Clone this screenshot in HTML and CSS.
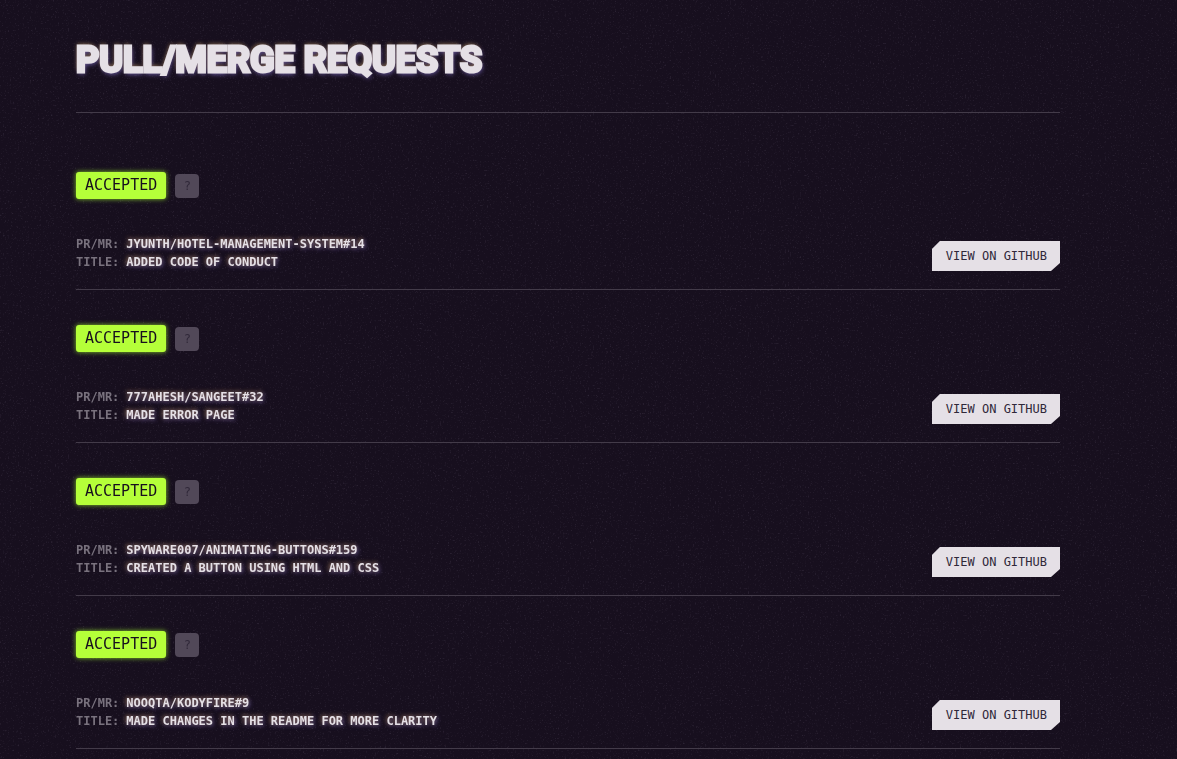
FILE: index.html
```html
<!DOCTYPE html>
<html lang="en">
<head>
<meta charset="utf-8">
<meta name="viewport" content="width=device-width, initial-scale=1">
<title>Pull/Merge Requests</title>
<link rel="stylesheet" href="styles.css">
</head>
<body>
<svg class="grain" aria-hidden="true">
  <filter id="noise" x="0" y="0" width="100%" height="100%" color-interpolation-filters="sRGB">
    <feTurbulence type="fractalNoise" baseFrequency="0.6" numOctaves="3" seed="4"/>
    <feColorMatrix values="0 0 0 0 0.55  0 0 0 0 0.5  0 0 0 0 0.6  1.5 0 0 0 -0.88"/>
  </filter>
  <rect width="100%" height="100%" filter="url(#noise)"/>
</svg>
<main class="page">
  <header class="page-header"><h1 class="title">PULL/MERGE REQUESTS</h1></header>
  <ul class="requests">
    <li class="request">
      <div class="status"><span class="badge">ACCEPTED</span><button class="help" type="button" aria-label="About this status">?</button></div>
      <div class="request-body">
        <dl class="details">
          <div class="detail"><dt>PR/MR:</dt><dd>JYUNTH/HOTEL-MANAGEMENT-SYSTEM#14</dd></div>
          <div class="detail"><dt>TITLE:</dt><dd>ADDED CODE OF CONDUCT</dd></div>
        </dl>
        <a class="view" href="#">VIEW ON GITHUB</a>
      </div>
    </li>
    <li class="request">
      <div class="status"><span class="badge">ACCEPTED</span><button class="help" type="button" aria-label="About this status">?</button></div>
      <div class="request-body">
        <dl class="details">
          <div class="detail"><dt>PR/MR:</dt><dd>777AHESH/SANGEET#32</dd></div>
          <div class="detail"><dt>TITLE:</dt><dd>MADE ERROR PAGE</dd></div>
        </dl>
        <a class="view" href="#">VIEW ON GITHUB</a>
      </div>
    </li>
    <li class="request">
      <div class="status"><span class="badge">ACCEPTED</span><button class="help" type="button" aria-label="About this status">?</button></div>
      <div class="request-body">
        <dl class="details">
          <div class="detail"><dt>PR/MR:</dt><dd>SPYWARE007/ANIMATING-BUTTONS#159</dd></div>
          <div class="detail"><dt>TITLE:</dt><dd>CREATED A BUTTON USING HTML AND CSS</dd></div>
        </dl>
        <a class="view" href="#">VIEW ON GITHUB</a>
      </div>
    </li>
    <li class="request">
      <div class="status"><span class="badge">ACCEPTED</span><button class="help" type="button" aria-label="About this status">?</button></div>
      <div class="request-body">
        <dl class="details">
          <div class="detail"><dt>PR/MR:</dt><dd>NOOQTA/KODYFIRE#9</dd></div>
          <div class="detail"><dt>TITLE:</dt><dd>MADE CHANGES IN THE README FOR MORE CLARITY</dd></div>
        </dl>
        <a class="view" href="#">VIEW ON GITHUB</a>
      </div>
    </li>
  </ul>
</main>
</body>
</html>
```
FILE: styles.css
```css
* { box-sizing: border-box; }

body {
  margin: 0;
  background: #170f1e;
  color: #e5e0e6;
  font: 12px/18px "DejaVu Sans Mono", "Liberation Mono", monospace;
}

.grain {
  position: fixed;
  inset: 0;
  width: 100%;
  height: 100%;
  opacity: 0.4;
  pointer-events: none;
}

.page {
  position: relative;
  padding: 32px 117px 0 76px;
}

.page-header {
  padding-bottom: 24px;
  border-bottom: 1px solid #433b49;
}

.title {
  margin: 0;
  font: bold 36px/56px "Roboto", sans-serif;
  -webkit-text-stroke: 3px #e5e0e6;
  text-shadow: -1px -2px 4px #876b4a, 1px 2px 5px #7666b8;
}

.requests {
  margin: 0;
  padding: 24px 0 0;
  list-style: none;
}

.request {
  padding: 35px 0 18px;
  border-bottom: 1px solid #433b49;
}

.status {
  display: flex;
  align-items: center;
  gap: 9px;
  margin-bottom: 36px;
}

.badge {
  padding: 0 9px;
  border-radius: 3px;
  background: #b5ff39;
  color: #170f1e;
  font-size: 15px;
  line-height: 27px;
  box-shadow: 0 0 5px #86c92b;
}

.help {
  width: 24px;
  height: 24px;
  padding: 0;
  border: 0;
  border-radius: 4px;
  background: #514858;
  color: #302839;
  font: inherit;
}

.request-body {
  display: flex;
  align-items: flex-end;
  justify-content: space-between;
  gap: 24px;
}

.details { margin: 0; font-weight: bold; }

.detail { display: flex; gap: 7px; }

.detail dt { color: #79727e; }

.detail dd {
  margin: 0;
  text-shadow: -1px -1px 4px #846444, 1px 1px 4px #665aa0;
}

.view {
  flex: none;
  padding: 0 13px 0 14px;
  background: #e5e0e6;
  color: #302839;
  line-height: 30px;
  text-decoration: none;
  clip-path: polygon(8px 0, 100% 0, 100% calc(100% - 8px), calc(100% - 9px) 100%, 0 100%, 0 8px);
}
```
